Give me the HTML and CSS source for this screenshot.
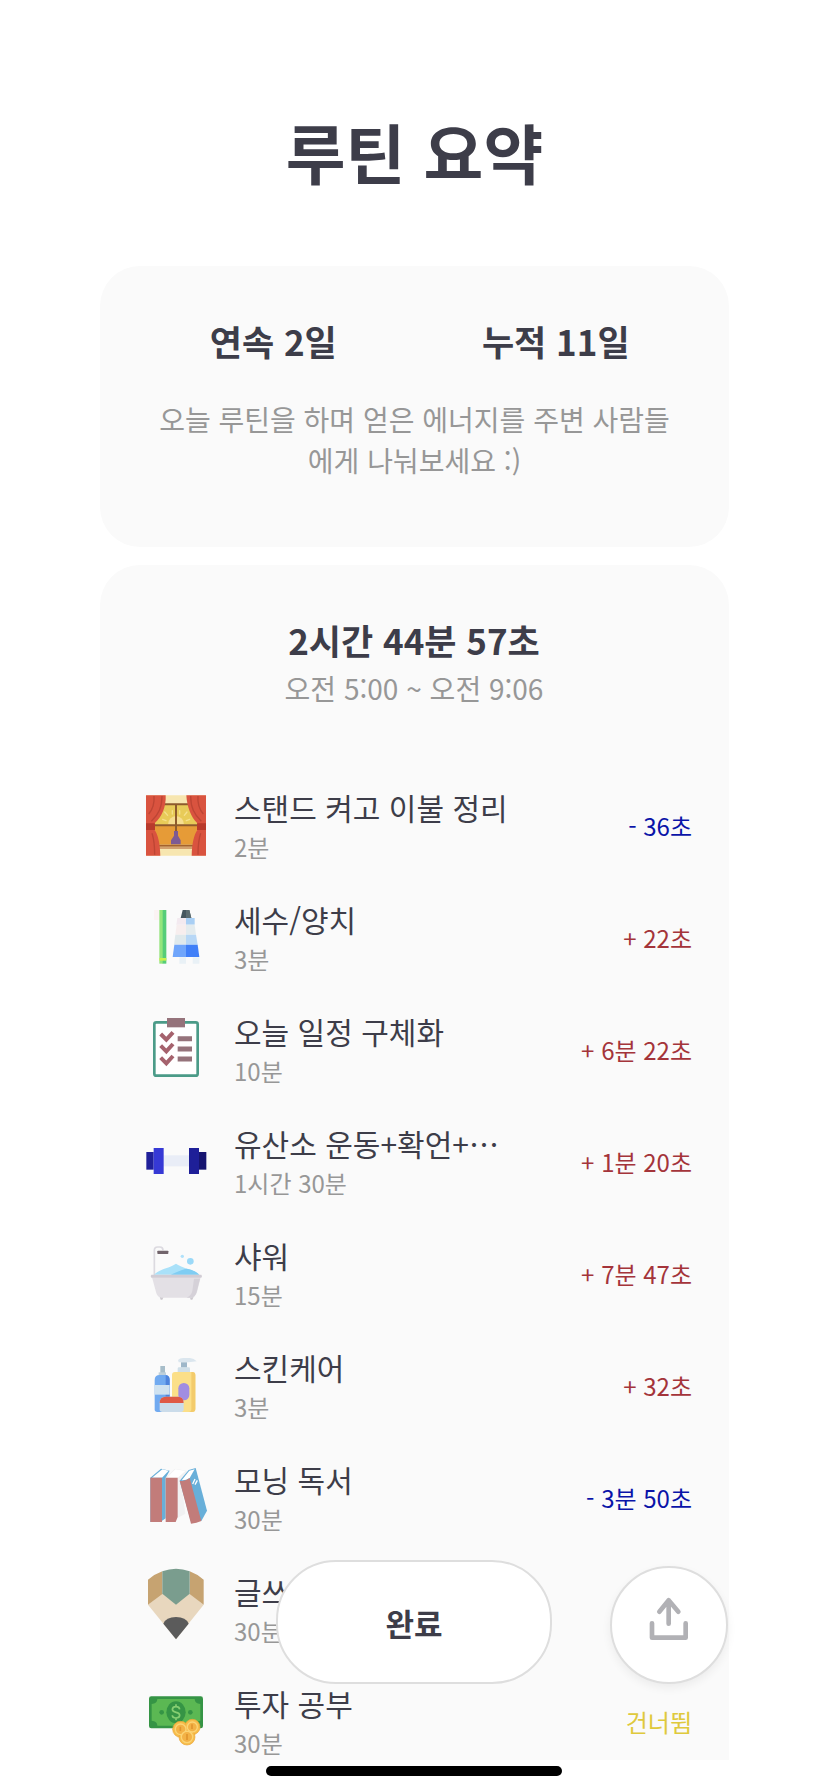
FILE: index.html
```html
<!DOCTYPE html>
<html lang="ko">
<head>
<meta charset="utf-8">
<meta name="viewport" content="width=device-width, initial-scale=1">
<title>루틴 요약</title>
<link rel="stylesheet" href="styles.css">
</head>
<body>
<div class="screen">
  <main class="content">
    <h1 class="title">루틴 요약</h1>

    <section class="card streak">
      <div class="streak-stats">
        <strong class="stat">연속 2일</strong>
        <strong class="stat">누적 11일</strong>
      </div>
      <p class="message">오늘 루틴을 하며 얻은 에너지를 주변 사람들에게 나눠보세요 :)</p>
    </section>

    <section class="card summary">
      <h2 class="duration">2시간 44분 57초</h2>
      <p class="range">오전 5:00 ~ 오전 9:06</p>
      <ul class="list">
        <li class="row">
          <svg class="icon" viewBox="42 57 192 216" aria-hidden="true">
            <rect x="48" y="76" width="180" height="181" rx="3" fill="#f7e6b0"/>
            <rect x="74" y="102" width="128" height="62" fill="#e8cb58"/>
            <rect x="74" y="167" width="128" height="57" fill="#e69b37"/>
            <path d="M114 164a24 26 0 0 1 48 0z" fill="#f6dd90"/>
            <path d="M98 148l10 4M104 126l9 10M127 122v10M149 122v10M171 126l-8 10M179 148l-10 4" stroke="#f5e08c" stroke-width="4" stroke-linecap="round"/>
            <path d="M74 103h128M74 166h128M138 103v82" stroke="#8e5b2c" stroke-width="6" fill="none"/>
            <path d="M76 224h124v6H76z" fill="#a4622d"/>
            <path d="M86 230h104v7H86z" fill="#d3a06e"/>
            <path d="M132 183h12v14l8 14v12h-29v-12l9-14z" fill="#7d5a94"/>
            <path d="M48 76h59c2 34-12 66-33 84v20c10 14 16 40 17 77H48zM228 76h-59c2 34 14 66 33 84v20c-10 14-16 40-17 77h43z" fill="#d9533f"/>
            <path d="M72 78c2 24-4 40-16 54M96 78c0 34-10 54-32 76M66 190c6 18 8 38 8 64M204 78c-2 24 4 40 16 54M182 78c0 34 10 54 32 76M212 190c-6 18-8 38-8 64" stroke="#bd4534" stroke-width="4" fill="none"/>
            <path d="M48 160h27v20H48zM201 160h27v20h-27z" fill="#b83a2b"/>
          </svg>
          <div class="text"><span class="name">스탠드 켜고 이불 정리</span><span class="planned">2분</span></div>
          <span class="delta early">- 36초</span>
        </li>
        <li class="row">
          <svg class="icon" viewBox="42 393 192 216" aria-hidden="true">
            <path d="M72 420h16v30H72z" fill="#fbf3f3"/>
            <path d="M88 420h11v161H88z" fill="#93e57c"/>
            <path d="M98 420h11v161H98z" fill="#55cd78"/>
            <path d="M88 564h21v8H88z" fill="#c9f04e"/>
            <path d="M158 420h20l6 24h-32z" fill="#46575f"/>
            <path d="M168 420h10l6 24h-16z" fill="#5c6c70"/>
            <path d="M142 444h27v20h-30z" fill="#f3eaf0"/>
            <path d="M168 444h26v20h-26z" fill="#a9cff4"/>
            <path d="M140 464h28v30h-32z" fill="#f7eeee"/>
            <path d="M168 464h26l4 30h-30z" fill="#e3ebee"/>
            <path d="M136 494h32v30h-36z" fill="#dfe9ec"/>
            <path d="M168 494h30l5 30h-35z" fill="#b7d7f6"/>
            <path d="M133 524h35v37h-40z" fill="#6fa5fb"/>
            <path d="M168 524h35l5 37h-40z" fill="#3f7ff8"/>
            <path d="M148 562h20v19h-20zM188 562h20v19h-20z" fill="#e9f1f6"/>
          </svg>
          <div class="text"><span class="name">세수/양치</span><span class="planned">3분</span></div>
          <span class="delta late">+ 22초</span>
        </li>
        <li class="row">
          <svg class="icon" viewBox="42 69 192 216" aria-hidden="true">
            <rect x="73" y="97" width="130" height="160" rx="6" fill="#fff" stroke="#4b9b88" stroke-width="8"/>
            <rect x="111" y="84" width="54" height="28" fill="#95737b"/>
            <path d="M92 132l17 17 20-22M92 167l17 17 20-22M92 203l17 17 20-22" fill="none" stroke="#a5626d" stroke-width="12"/>
            <path d="M143 146h43M143 177h43M143 207h43" stroke="#95737b" stroke-width="15"/>
          </svg>
          <div class="text"><span class="name">오늘 일정 구체화</span><span class="planned">10분</span></div>
          <span class="delta late">+ 6분 22초</span>
        </li>
        <li class="row">
          <svg class="icon" viewBox="42 405 192 216" aria-hidden="true">
            <path d="M100 496h78v33h-78z" fill="#e9edf7"/>
            <path d="M49 486h22v53H49z" fill="#20209a"/>
            <path d="M71 474h30v78H71z" fill="#3639d5"/>
            <path d="M206 486h23v53h-23z" fill="#161470"/>
            <path d="M177 474h30v78h-30z" fill="#1e1f98"/>
          </svg>
          <div class="text"><span class="name">유산소 운동+확언+…</span><span class="planned">1시간 30분</span></div>
          <span class="delta late">+ 1분 20초</span>
        </li>
        <li class="row">
          <svg class="icon" viewBox="42 81 192 216" aria-hidden="true">
            <path d="M73 196v-75q0-10 10-10h7q9 0 9 10" fill="none" stroke="#dcdae0" stroke-width="5"/>
            <rect x="82" y="122" width="33" height="10" rx="2" fill="#71646b"/>
            <circle cx="157" cy="139" r="5" fill="#b0e1fa"/>
            <circle cx="181" cy="154" r="10" fill="#9bd9f8"/>
            <path d="M72 194c18-18 40-17 66-33 26 16 52 17 70 33z" fill="#a9e1f9"/>
            <path d="M122 194c24-10 34-16 48-18 16 2 28 8 38 18z" fill="#7fcdf3"/>
            <path d="M89 260h12l-4 9h-5zM179 260h12l-4 9h-5z" fill="#cbc8cd"/>
            <path d="M66 202h146l-11 44q-5 17-18 17H95q-13 0-17-17z" fill="#e3e0e5"/>
            <path d="M192 206h18l-10 40q-5 17-18 17h-12q14-6 17-20z" fill="#d5d1d8"/>
            <path d="M64 194h150q4 4 0 9H64q-4-5 0-9z" fill="#d1ccd4"/>
          </svg>
          <div class="text"><span class="name">샤워</span><span class="planned">15분</span></div>
          <span class="delta late">+ 7분 47초</span>
        </li>
        <li class="row">
          <svg class="icon" viewBox="42 417 192 216" aria-hidden="true">
            <path d="M144 450q6-7 18-6h18q12 1 20 10l-24 3h-30z" fill="#dbe6ee"/>
            <path d="M153 457h18v16h-18z" fill="#9eb7c9"/>
            <rect x="143" y="472" width="37" height="18" rx="4" fill="#d0dfe8"/>
            <rect x="126" y="486" width="70" height="120" rx="9" fill="#fbdf88"/>
            <path d="M184 486h3q9 0 9 9v102q0 9-9 9h-12q9 0 9-9z" fill="#f3cb6b"/>
            <rect x="145" y="519" width="33" height="52" rx="16" fill="#a18de1"/>
            <path d="M91 468h14v24H91z" fill="#a7bdc9"/>
            <path d="M86 487h22v15H86z" fill="#bfd0da"/>
            <path d="M74 510q0-15 15-15h16q14 0 14 15v88q0 8-8 8H82q-8 0-8-8z" fill="#71aaf0"/>
            <path d="M107 495q12 1 12 15v88q0 8-8 8h-4z" fill="#4e84dc"/>
            <path d="M74 525h45v29H74z" fill="#cfe2f0"/>
            <path d="M89 578q0-18 18-18h37q17 0 17 18v20q0 8-8 8H97q-8 0-8-8z" fill="#cbdcea"/>
            <path d="M89 579q0-19 18-19h37q17 0 17 19z" fill="#df5945"/>
          </svg>
          <div class="text"><span class="name">스킨케어</span><span class="planned">3분</span></div>
          <span class="delta late">+ 32초</span>
        </li>
        <li class="row">
          <svg class="icon" viewBox="42 63 192 216" aria-hidden="true">
            <path d="M61 113l32-27 26 6-12 22v121l-16 11H61z" fill="#68afd9"/>
            <path d="M66 113l31-25 19 4-20 21z" fill="#fff"/>
            <path d="M61 113h35v133H61z" fill="#c27c7a"/>
            <path d="M107 113l28-27 38 7-20 28 13 100-29 16z" fill="#f1f1f2"/>
            <path d="M111 113l25-25 30 5-23 20z" fill="#fff"/>
            <path d="M107 113h36v118l-6 15h-30z" fill="#c27c7a"/>
            <path d="M149 122l27-32 21-6 34 128-17 31-32-1z" fill="#68afd9"/>
            <path d="M155 121l23-29 16-4-15 26q-12 8-24 7z" fill="#fff"/>
            <path d="M188 132l7-15M195 134l7-13" stroke="#fff" stroke-width="4"/>
            <path d="M149 122q15 4 30-8l35 129q-14 7-31 8z" fill="#c27c7a"/>
          </svg>
          <div class="text"><span class="name">모닝 독서</span><span class="planned">30분</span></div>
          <span class="delta early">- 3분 50초</span>
        </li>
        <li class="row">
          <svg class="icon" viewBox="42 399 192 216" aria-hidden="true">
            <path d="M54 494l42-34h83l42 34-83 104z" fill="#e8d7be"/>
            <path d="M54 419q18-16 43-25v68l-43 32zM221 419q-18-16-42-25v68l42 32z" fill="#c6a371"/>
            <path d="M97 394q41-15 82 0v67l-41 33-41-33z" fill="#7a9d8e"/>
            <path d="M100 551q8-20 38-20t38 20l-38 47z" fill="#5b5b5b"/>
          </svg>
          <div class="text"><span class="name">글쓰기</span><span class="planned">30분</span></div>
        </li>
        <li class="row">
          <svg class="icon" viewBox="42 405 192 216" aria-hidden="true">
            <rect x="57" y="439" width="162" height="96" rx="7" fill="#359445"/>
            <path d="M82 447h112q0 13 17 15v50q-17 2-17 15H82q0-13-17-15v-50q17-2 17-15z" fill="#5bb853"/>
            <ellipse cx="138" cy="487" rx="29" ry="33" fill="#359445"/>
            <circle cx="95" cy="487" r="7" fill="#359445"/>
            <circle cx="181" cy="487" r="7" fill="#359445"/>
            <path d="M149 478q-1-8-11-8t-11 8q0 7 11 9t11 9q0 8-11 8t-11-8M138 463v7M138 504v7" fill="none" stroke="#86ce72" stroke-width="5"/>
            <g fill="#f7bd4a" stroke="#eba438" stroke-width="2">
              <circle cx="152" cy="538" r="24"/>
              <circle cx="187" cy="531" r="23"/>
              <circle cx="171" cy="561" r="24"/>
            </g>
            <g fill="#f3b246" stroke="#fbd476" stroke-width="4">
              <circle cx="152" cy="538" r="16"/>
              <circle cx="187" cy="531" r="15"/>
              <circle cx="171" cy="561" r="17"/>
            </g>
            <path d="M151 530v13M186 523v14M171 552v18" stroke="#e0952f" stroke-width="5"/>
          </svg>
          <div class="text"><span class="name">투자 공부</span><span class="planned">30분</span></div>
          <span class="delta skipped">건너뜀</span>
        </li>
      </ul>
    </section>
  </main>

  <div class="actions">
    <button class="done" type="button">완료</button>
    <button class="share" type="button" aria-label="공유">
      <svg class="share-icon" viewBox="266 174 120 132" aria-hidden="true">
        <path d="M325 184v70M297 218l28-34 29 34" />
        <path d="M275 253v43h101v-43"/>
      </svg>
    </button>
  </div>
  <div class="home-indicator"></div>
</div>
</body>
</html>
```
FILE: styles.css
```css
* {
  box-sizing: border-box;
}

body {
  margin: 0;
  background: #fff;
  color: #3d3d49;
  font-family: "Noto Sans CJK KR", "Noto Sans", sans-serif;
}

.screen {
  position: relative;
  height: 100vh;
  padding-bottom: 32px;
}

.content {
  display: flex;
  flex-direction: column;
  height: 100%;
  padding: 103px 99px 0 100px;
  overflow: hidden;
}

.title {
  flex: none;
  margin: 0 0 67px;
  font-size: 65px;
  line-height: 96px;
  font-weight: 700;
  text-align: center;
}

.card {
  flex: none;
  border-radius: 40px;
  background: #fafafa;
}

.streak {
  margin-bottom: 18px;
  padding: 49px 32px 66px;
}

.streak-stats {
  display: grid;
  grid-template-columns: 1fr 1fr;
  margin-bottom: 32px;
  text-align: center;
}

.stat,
.duration {
  font-size: 35px;
  line-height: 52px;
  font-weight: 700;
}

.message {
  margin: 0 24px;
  color: #979797;
  font-size: 28px;
  line-height: 41px;
  text-align: center;
}

.summary {
  padding: 49px 37px 160px 44px;
}

.duration,
.range {
  margin: 0;
  padding-right: 8px;
  text-align: center;
}

.range {
  margin-bottom: 59px;
  color: #979797;
  font-size: 28px;
  line-height: 44px;
}

.list {
  margin: 0;
  padding: 0;
  list-style: none;
}

.row {
  display: flex;
  align-items: center;
  height: 112px;
}

.icon {
  flex: none;
  width: 64px;
  height: 72px;
  margin-right: 26px;
  overflow: visible;
}

.text {
  display: flex;
  flex: 1;
  flex-direction: column;
  min-width: 0;
  padding-top: 2px;
}

.name {
  overflow: hidden;
  font-size: 30px;
  line-height: 42px;
  white-space: nowrap;
  text-overflow: ellipsis;
}

.planned {
  color: #979797;
  font-size: 24px;
  line-height: 38px;
}

.delta {
  flex: none;
  padding-top: 2px;
  font-size: 24px;
  line-height: 38px;
}

.early {
  color: #0a14a8;
}

.late {
  color: #a4343a;
}

.skipped {
  color: #dfc93c;
}

.actions {
  position: absolute;
  right: 100px;
  bottom: 108px;
  left: 100px;
  display: grid;
  grid-template-columns: 1fr auto 1fr;
  align-items: end;
}

.done {
  grid-column: 2;
  width: 276px;
  height: 124px;
  padding: 0;
  border: 2px solid #dedede;
  border-radius: 60px;
  background: #fff;
  color: inherit;
  font: inherit;
  font-size: 31px;
  font-weight: 700;
}

.share {
  display: flex;
  align-items: center;
  justify-content: center;
  justify-self: end;
  width: 118px;
  height: 118px;
  padding: 0 0 12px;
  border: 2px solid #dedede;
  border-radius: 50%;
  background: #fff;
  box-shadow: 0 4px 10px rgba(0, 0, 0, 0.06);
}

.share-icon {
  width: 40px;
  height: 44px;
  fill: none;
  stroke: #b1b1b5;
  stroke-width: 14;
  stroke-linecap: round;
  stroke-linejoin: round;
}

.home-indicator {
  position: absolute;
  bottom: 16px;
  left: 50%;
  width: 296px;
  height: 10px;
  margin-left: -148px;
  border-radius: 5px;
  background: #000;
}
```
